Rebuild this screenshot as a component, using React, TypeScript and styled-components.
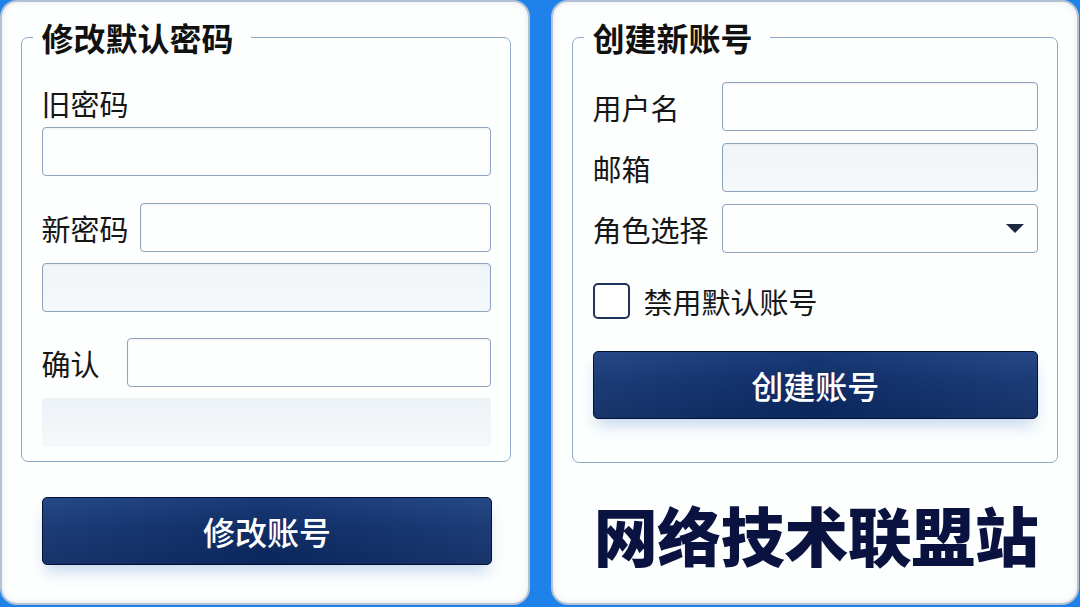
import React from 'react';
import styled, { createGlobalStyle } from 'styled-components';

const GlobalStyle = createGlobalStyle`
  html, body {
    margin: 0;
    padding: 0;
    height: 607px;
    overflow: hidden;
    background: #1f82ea;
  }
  body {
    font-family: "Noto Sans CJK SC", "Noto Sans", sans-serif;
    color: #151515;
  }
`;

function App() {
  return (
    <Page>
      <GlobalStyle />
      <Card $width={530} $padRight={17}>
        <Group>
          <Legend>修改默认密码</Legend>
          <Stack>
            <Label $top={26}>旧密码</Label>
            <Input $top={4} type="password" />
            <Row $top={27} $gap={11}>
              <Label>新密码</Label>
              <Input type="password" />
            </Row>
            <Input $top={11} $muted type="password" />
            <Row $top={26} $gap={27}>
              <Label>确认</Label>
              <Input type="password" />
            </Row>
            <Ghost />
          </Stack>
        </Group>
        <ActionButton $top={35} $side={21}>修改账号</ActionButton>
      </Card>

      <Card $width={528} $padRight={19}>
        <Group $bottom={43}>
          <Legend>创建新账号</Legend>
          <FormGrid>
            <Label>用户名</Label>
            <Input />
            <Label>邮箱</Label>
            <Input $muted />
            <Label>角色选择</Label>
            <SelectBox>
              <Select defaultValue="">
                <option value="" />
                <option value="admin">管理员</option>
                <option value="user">普通用户</option>
              </Select>
              <svg width="18" height="9" viewBox="0 0 18 9">
                <path d="M0 0 H18 L9 9 Z" fill="#1b2a40" />
              </svg>
            </SelectBox>
          </FormGrid>
          <CheckRow>
            <CheckBox type="checkbox" />
            <CheckText>禁用默认账号</CheckText>
          </CheckRow>
          <ActionButton $top={32}>创建账号</ActionButton>
        </Group>
        <Brand>网络技术联盟站</Brand>
      </Card>
    </Page>
  );
}

const Page = styled.div`
  display: flex;
  gap: 21px;
  height: 606px;
  box-sizing: border-box;
`;

const Card = styled.div<{ $width: number; $padRight: number }>`
  width: ${(p) => p.$width}px;
  height: 605px;
  box-sizing: border-box;
  display: flex;
  flex-direction: column;
  padding: 15px ${(p) => p.$padRight}px 0 19px;
  background: #fdfefe;
  border: 2px solid #b3c1d1;
  border-radius: 17px;
  box-shadow: inset 0 0 6px rgba(150, 175, 205, 0.25);
`;

const Group = styled.fieldset<{ $bottom?: number }>`
  margin: 0;
  padding: 0 19px ${(p) => p.$bottom ?? 14}px 19.5px;
  border: 1.5px solid #8eaacb;
  border-radius: 7px;
  min-width: 0;
`;

const Legend = styled.legend`
  margin-left: -9px;
  padding: 0 17px 0 9px;
  font-size: 32px;
  line-height: 40px;
  font-weight: 700;
  color: #111;
`;

const Stack = styled.div`
  display: flex;
  flex-direction: column;
`;

const Label = styled.label<{ $top?: number }>`
  margin-top: ${(p) => p.$top ?? 0}px;
  font-size: 29px;
  line-height: 40px;
  color: #161616;
  white-space: nowrap;
`;

const Row = styled.div<{ $top: number; $gap: number }>`
  display: flex;
  align-items: center;
  gap: ${(p) => p.$gap}px;
  margin-top: ${(p) => p.$top}px;

  > input {
    flex: 1;
    width: 0;
  }
`;

const Input = styled.input<{ $top?: number; $muted?: boolean }>`
  flex: none;
  width: 100%;
  height: 49px;
  margin: ${(p) => p.$top ?? 0}px 0 0;
  box-sizing: border-box;
  border: 1.5px solid #8ea4bf;
  border-radius: 4px;
  background: ${(p) => (p.$muted ? 'linear-gradient(180deg, #f1f5f8, #f6f9fb)' : '#fdfefe')};
  box-shadow: inset 0 1px 2px rgba(120, 140, 170, 0.12);
  font-family: inherit;
  font-size: 18px;
  outline: none;
`;

const Ghost = styled.div`
  height: 49px;
  margin-top: 11px;
  border-radius: 3px;
  background: linear-gradient(180deg, #edf2f7, #f5f9fb);
`;

const ActionButton = styled.button<{ $top: number; $side?: number }>`
  height: 68px;
  margin: ${(p) => p.$top}px ${(p) => (p.$side ? 19 : 0)}px 0 ${(p) => p.$side ?? 0}px;
  width: ${(p) => (p.$side ? 'auto' : '100%')};
  border: 1.5px solid #051332;
  border-radius: 5px;
  background:
    linear-gradient(90deg, rgba(255, 255, 255, 0.05), rgba(0, 0, 0, 0.08) 50%, rgba(255, 255, 255, 0.05)),
    linear-gradient(180deg, #1a3f80 0%, #11316f 45%, #0b2962 100%);
  box-shadow: 0 10px 16px -4px rgba(60, 120, 200, 0.3);
  color: #fff;
  font-family: inherit;
  font-size: 32px;
  font-weight: 500;
  cursor: pointer;
`;

const FormGrid = styled.div`
  display: grid;
  grid-template-columns: 129px 1fr;
  grid-auto-rows: 49px;
  row-gap: 12px;
  align-items: center;
  margin-top: 25px;

  > input {
    height: 100%;
  }
`;

const SelectBox = styled.div`
  display: flex;
  align-items: center;
  height: 49px;
  box-sizing: border-box;
  padding-right: 13px;
  border: 1.5px solid #8ea4bf;
  border-radius: 4px;
  background: #fdfefe;
`;

const Select = styled.select`
  flex: 1;
  height: 100%;
  border: none;
  background: transparent;
  appearance: none;
  font-family: inherit;
  font-size: 18px;
  outline: none;
`;

const CheckRow = styled.label`
  display: flex;
  align-items: center;
  gap: 14px;
  margin-top: 30px;
`;

const CheckBox = styled.input`
  appearance: none;
  width: 37px;
  height: 36px;
  margin: 0;
  box-sizing: border-box;
  border: 2.5px solid #1f3458;
  border-radius: 5px;
  background: #fff;
`;

const CheckText = styled.span`
  font-size: 29px;
  line-height: 36px;
  color: #161616;
`;

const Brand = styled.div`
  flex: 1;
  display: flex;
  align-items: center;
  justify-content: center;
  padding: 0 0 0 2px;
  font-size: 64px;
  font-weight: 900;
  color: #0a1240;
  letter-spacing: -0.5px;
`;

export default App;
